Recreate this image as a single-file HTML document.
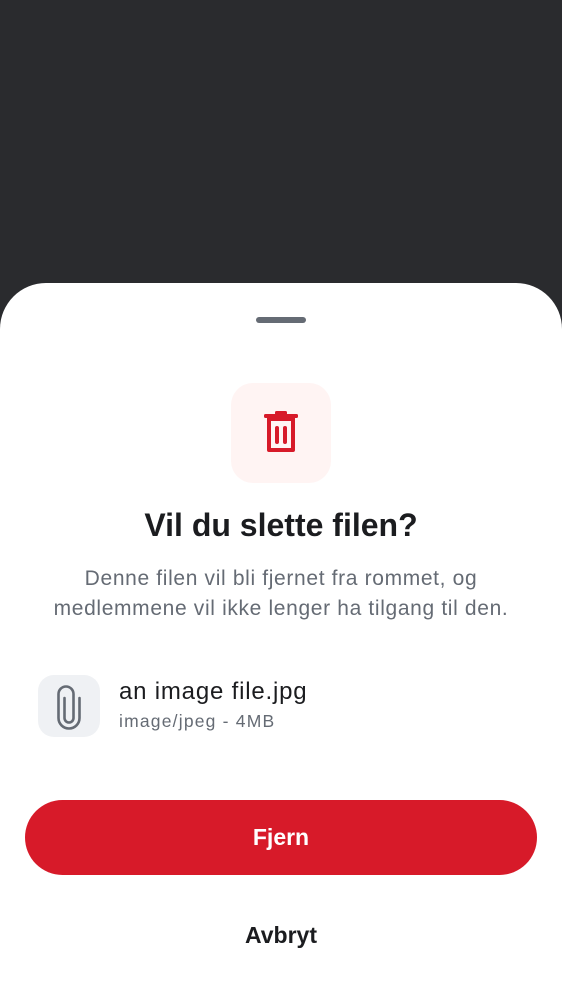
<!DOCTYPE html>
<html><head><meta charset="utf-8"><style>
html,body{margin:0;padding:0;}
body{width:562px;height:1000px;background:#2a2b2e;position:relative;overflow:hidden;font-family:"Liberation Sans",Roboto,sans-serif;}
.sheet{position:absolute;left:0;top:283px;width:562px;height:717px;background:#fff;border-radius:46px 46px 0 0;}
.handle{position:absolute;left:256px;top:317px;width:50px;height:6px;border-radius:3px;background:#656b74;}
.ibox{position:absolute;left:231px;top:383px;width:100px;height:100px;border-radius:22px;background:#fff4f3;}
.title{position:absolute;top:507px;left:0;width:562px;text-align:center;font-size:32px;font-weight:bold;color:#1b1c1f;}
.desc{position:absolute;top:564px;left:0;width:562px;text-align:center;font-size:21px;letter-spacing:0.65px;line-height:30px;color:#656b74;}
.fbox{position:absolute;left:38px;top:675px;width:62px;height:62px;border-radius:16px;background:#eff1f4;}
.fname{position:absolute;left:119px;top:678px;font-size:24px;letter-spacing:0.8px;color:#1b1c1f;}
.fmeta{position:absolute;left:119px;top:711px;font-size:17.5px;color:#656b74;letter-spacing:1.2px;}
.btn{position:absolute;left:25px;top:800px;width:512px;height:75px;border-radius:38px;background:#d71a29;color:#fff;font-size:23px;font-weight:bold;text-align:center;line-height:75px;}
.cancel{position:absolute;top:922px;left:0;width:562px;text-align:center;font-size:23px;font-weight:bold;color:#1b1c1f;}
</style></head><body>
<div class="sheet"></div>
<div class="handle"></div>
<div class="ibox"></div>
<svg style="position:absolute;left:262px;top:410px" width="38" height="44" viewBox="0 0 38 44">
<rect x="2" y="4" width="34" height="4" rx="1.5" fill="#d71a29"/>
<rect x="13" y="1" width="12" height="4" rx="1.5" fill="#d71a29"/>
<path d="M5 8 h28 v32 a2 2 0 0 1 -2 2 h-24 a2 2 0 0 1 -2 -2z M9 11 v27 h20 v-27z" fill="#d71a29" fill-rule="evenodd"/>
<rect x="13" y="16" width="4" height="18" rx="2" fill="#d71a29"/>
<rect x="21" y="16" width="4" height="18" rx="2" fill="#d71a29"/>
</svg>
<div class="title">Vil du slette filen?</div>
<div class="desc">Denne filen vil bli fjernet fra rommet, og<br>medlemmene vil ikke lenger ha tilgang til den.</div>
<div class="fbox"></div>
<svg style="position:absolute;left:55px;top:684px" width="28" height="46" viewBox="0 0 28 46">
<path d="M9.5 14 v20 a4.5 4.5 0 0 0 9 0 v-24 a7.5 7.5 0 0 0 -15 0 v24 a10.5 10.5 0 0 0 21 0 v-20" fill="none" stroke="#656b74" stroke-width="2.6" stroke-linecap="round"/>
</svg>
<div class="fname">an image file.jpg</div>
<div class="fmeta">image/jpeg - 4MB</div>
<div class="btn">Fjern</div>
<div class="cancel">Avbryt</div>
</body></html>
